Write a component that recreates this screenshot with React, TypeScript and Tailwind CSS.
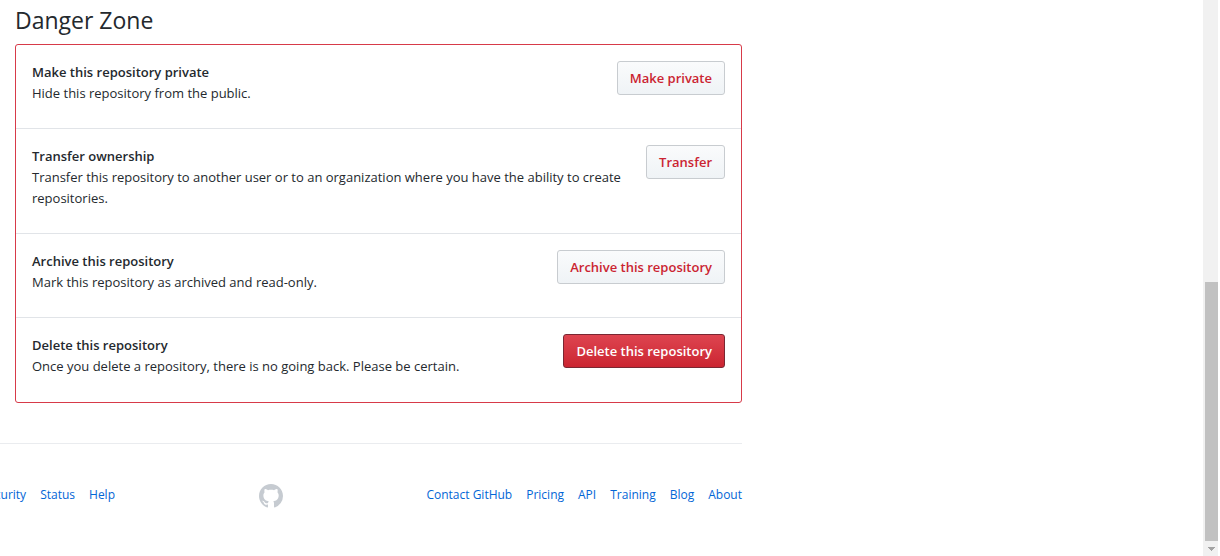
import React from 'react';

interface DangerAction {
  title: string;
  description: string;
  button: string;
  primary?: boolean;
}

const actions: DangerAction[] = [
  {
    title: 'Make this repository private',
    description: 'Hide this repository from the public.',
    button: 'Make private',
  },
  {
    title: 'Transfer ownership',
    description:
      'Transfer this repository to another user or to an organization where you have the ability to create repositories.',
    button: 'Transfer',
  },
  {
    title: 'Archive this repository',
    description: 'Mark this repository as archived and read-only.',
    button: 'Archive this repository',
  },
  {
    title: 'Delete this repository',
    description: 'Once you delete a repository, there is no going back. Please be certain.',
    button: 'Delete this repository',
    primary: true,
  },
];

const leftLinks = ['Security', 'Status', 'Help'];
const rightLinks = ['Contact GitHub', 'Pricing', 'API', 'Training', 'Blog', 'About'];

function DangerRow({ title, description, button, primary }: DangerAction) {
  return (
    <li className="flex items-start justify-between gap-4 border-t border-[#e1e4e8] px-4 pt-4 pb-6 first:border-t-0 last:pb-[25px]">
      <div className="min-w-0 pt-px text-[13px] leading-[21px]">
        <h3 className="font-semibold">{title}</h3>
        <p>{description}</p>
      </div>
      <button
        type="button"
        className={
          primary
            ? 'h-[34px] shrink-0 rounded-[3px] border border-[#7a2732] bg-linear-to-b from-[#de4450] to-[#cb2431] px-3 pt-0.5 text-[13px] font-semibold text-white'
            : 'h-[34px] shrink-0 rounded-[3px] border border-[#c8ccd0] bg-linear-to-b from-[#fafbfc] to-[#eff3f6] px-3 pt-0.5 text-[13px] font-semibold text-[#cb2431]'
        }
      >
        {button}
      </button>
    </li>
  );
}

function FooterLinks({ links }: { links: string[] }) {
  return (
    <ul className="flex shrink-0 gap-3.5">
      {links.map((link) => (
        <li key={link}>
          <a href="#" className="whitespace-nowrap text-[#0366d6] hover:underline">
            {link}
          </a>
        </li>
      ))}
    </ul>
  );
}

function Scrollbar() {
  return (
    <div aria-hidden="true" className="mr-0.5 flex w-[15px] shrink-0 flex-col justify-end bg-[#f1f1f1] pl-0.5">
      <div className="h-[259px] bg-[#c1c1c1]" />
      <div className="flex h-[15px] items-center justify-center">
        <svg width="7" height="4" viewBox="0 0 7 4" fill="#a3a3a3" shapeRendering="crispEdges">
          <path d="M0 0h7v1H6v1H5v1H4v1H3V3H2V2H1V1H0z" />
        </svg>
      </div>
    </div>
  );
}

export default function App() {
  return (
    <div className="flex min-h-screen bg-white font-['Open_Sans','Segoe_UI',sans-serif] text-[#24292e]">
      <div className="min-w-0 flex-1">
        <div className="max-w-[742px]">
          <main className="pl-[15px]">
            <h2 className="pt-1 pb-2 text-[23px] leading-8">Danger Zone</h2>
            <ul className="rounded-[3px] border border-[#d73a49]">
              {actions.map((action) => (
                <DangerRow key={action.title} {...action} />
              ))}
            </ul>
          </main>

          <footer className="mt-10 flex items-start justify-between border-t border-[#eaecef] pt-10 text-[12px] leading-[22px]">
            {/* the row of links runs off the left edge of the window */}
            <div className="flex w-[115px] justify-end overflow-hidden">
              <FooterLinks links={leftLinks} />
            </div>
            <a href="#" aria-label="GitHub" className="text-[#c6cbd1]">
              <svg width="24" height="24" viewBox="0 0 16 16" fill="currentColor">
                <path
                  fillRule="evenodd"
                  d="M8 0C3.58 0 0 3.58 0 8c0 3.54 2.29 6.53 5.47 7.59.4.07.55-.17.55-.38 0-.19-.01-.82-.01-1.49-2.01.37-2.53-.49-2.69-.94-.09-.23-.48-.94-.82-1.13-.28-.15-.68-.52-.01-.53.63-.01 1.08.58 1.23.82.72 1.21 1.87.87 2.33.66.07-.52.28-.87.51-1.07-1.78-.2-3.64-.89-3.64-3.95 0-.87.31-1.59.82-2.15-.08-.2-.36-1.02.08-2.12 0 0 .67-.21 2.2.82.64-.18 1.32-.27 2-.27.68 0 1.36.09 2 .27 1.53-1.04 2.2-.82 2.2-.82.44 1.1.16 1.92.08 2.12.51.56.82 1.27.82 2.15 0 3.07-1.87 3.75-3.65 3.95.29.25.54.73.54 1.48 0 1.07-.01 1.93-.01 2.2 0 .21.15.46.55.38A8.013 8.013 0 0 0 16 8c0-4.42-3.58-8-8-8z"
                />
              </svg>
            </a>
            <FooterLinks links={rightLinks} />
          </footer>
        </div>
      </div>
      <Scrollbar />
    </div>
  );
}
